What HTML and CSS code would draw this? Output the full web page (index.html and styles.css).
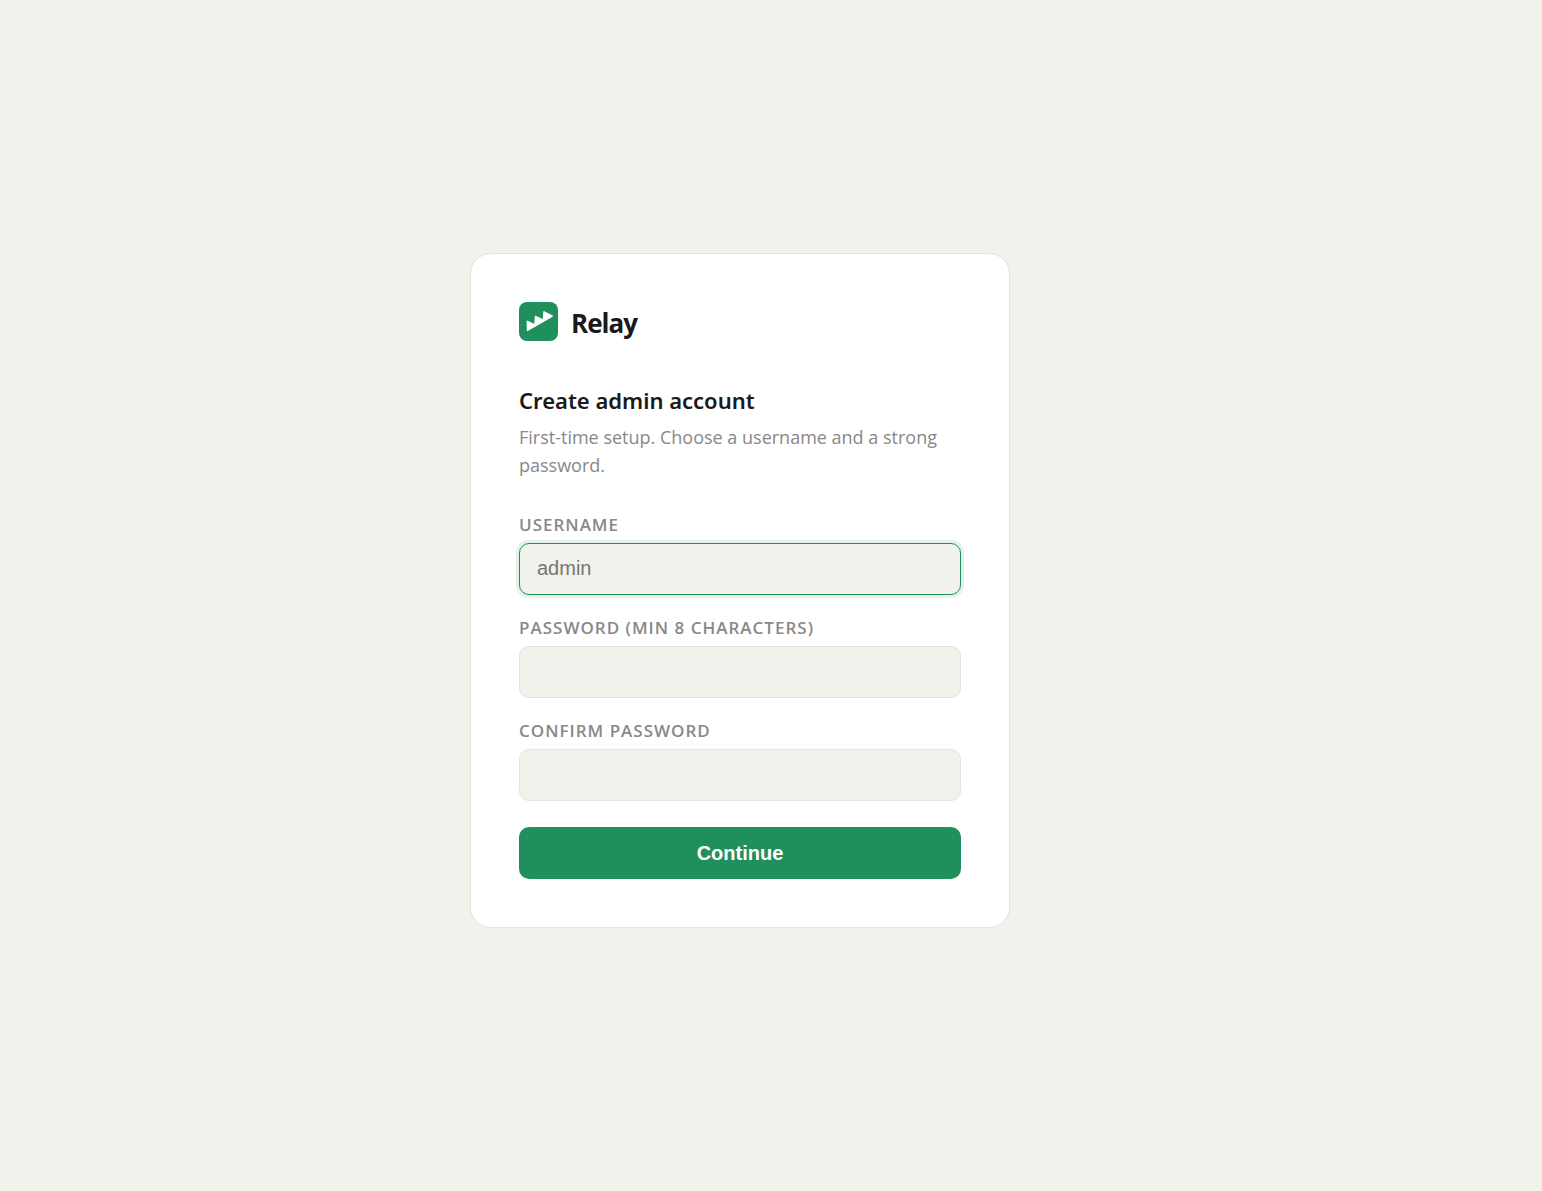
FILE: index.html
```html
<!DOCTYPE html>
<html lang="en">
<head>
  <meta charset="utf-8">
  <meta name="viewport" content="width=device-width, initial-scale=1">
  <title>Relay</title>
  <link rel="stylesheet" href="styles.css">
</head>
<body>
  <main class="card">
    <div class="brand">
      <svg class="brand-logo" viewBox="0 0 39 39" aria-hidden="true">
        <rect width="39" height="39" rx="8" fill="#1f8f5c"/>
        <path d="M8.300 19.300L15.800 22.800L16.500 14.500L24.300 18.200L25 9.800L33.300 14.200L8.500 28.300Z" fill="#fff" stroke="#fff" stroke-width="1.400" stroke-linejoin="round"/>
      </svg>
      <span class="brand-name">Relay</span>
    </div>
    <h1 class="title">Create admin account</h1>
    <p class="intro">First-time setup. Choose a username and a strong password.</p>
    <form class="form">
      <div class="field">
        <label class="label" for="username">Username</label>
        <input class="input" id="username" type="text" placeholder="admin" autocomplete="username" autofocus>
      </div>
      <div class="field">
        <label class="label" for="password">Password (min 8 characters)</label>
        <input class="input" id="password" type="password" autocomplete="new-password">
      </div>
      <div class="field">
        <label class="label" for="confirm">Confirm password</label>
        <input class="input" id="confirm" type="password" autocomplete="new-password">
      </div>
      <button class="button" type="button">Continue</button>
    </form>
  </main>
</body>
</html>
```
FILE: styles.css
```css
* {
  box-sizing: border-box;
}

body {
  min-height: 100vh;
  margin: 0;
  padding: 0 62px 10px 0;
  display: flex;
  align-items: center;
  justify-content: center;
  background: #f1f2ec;
  color: #1a1a1a;
  font-family: "Segoe UI", "Open Sans", sans-serif;
}

.card {
  width: 100%;
  max-width: 540px;
  padding: 48px;
  background: #fff;
  border: 1px solid #e4e4de;
  border-radius: 21px;
}

.brand {
  display: flex;
  align-items: flex-start;
  gap: 13px;
  margin-bottom: 37px;
}

.brand-logo {
  width: 39px;
  height: 39px;
}

.brand-name {
  font-size: 26px;
  line-height: 43px;
  font-weight: 700;
  letter-spacing: -1px;
}

.title {
  margin: 0 0 5px;
  font-family: "Segoe UI", "Noto Sans", sans-serif;
  font-size: 22px;
  line-height: 36px;
  font-weight: 600;
}

.intro {
  margin: 0 0 36px;
  color: #888;
  font-size: 18px;
  line-height: 28px;
}

.form {
  display: flex;
  flex-direction: column;
}

.field {
  display: flex;
  flex-direction: column;
  gap: 8px;
  margin-bottom: 23px;
}

.label {
  color: #888;
  font-size: 17px;
  line-height: 20px;
  font-weight: 600;
  letter-spacing: 1px;
  text-transform: uppercase;
}

.input {
  width: 100%;
  height: 52px;
  padding: 0 17px 2px;
  border: 1px solid #e4e4de;
  border-radius: 10px;
  background: #f1f2ec;
  color: #1a1a1a;
  font: 20px "Liberation Sans", Arial, sans-serif;
  outline: none;
}

.input::placeholder {
  color: #757575;
}

.input:focus {
  border-color: #1f8f5c;
  box-shadow: 0 0 0 3px #e4f2eb;
  caret-color: transparent;
}

.button {
  height: 52px;
  margin-top: 3px;
  border: 0;
  border-radius: 10px;
  background: #1f8f5c;
  color: #fff;
  font: bold 20px "Liberation Sans", Arial, sans-serif;
  cursor: pointer;
}
```
